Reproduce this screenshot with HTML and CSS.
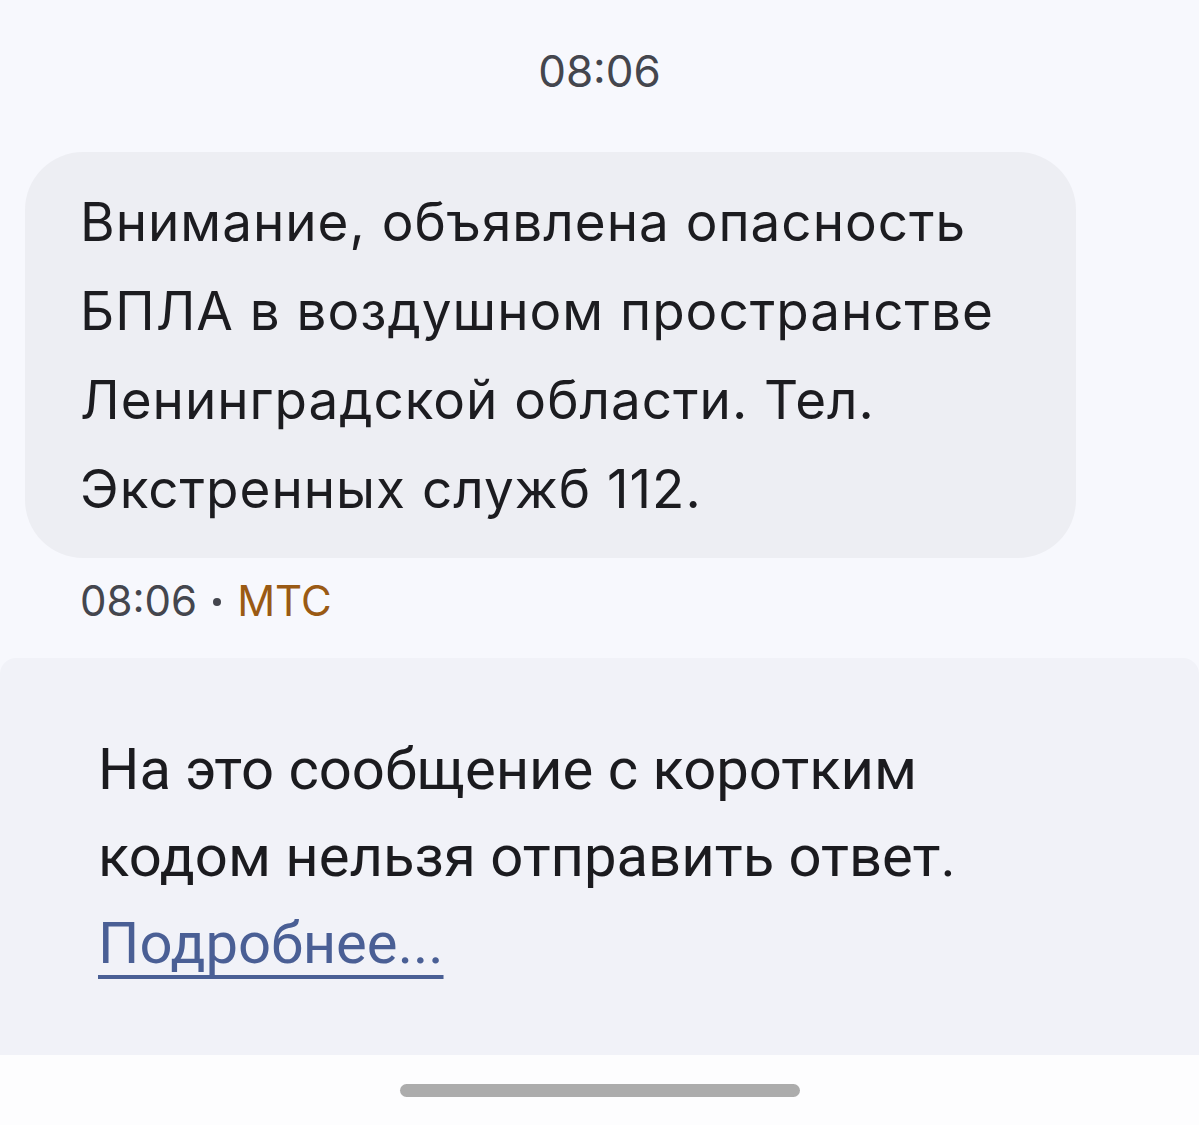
FILE: index.html
```html
<!DOCTYPE html>
<html>
<head>
  <title>Сообщение</title>
  <link rel="stylesheet" href="styles.css">
</head>
<body>
  <div class="chat">
    <div class="day-time">08:06</div>

    <div class="bubble">
      Внимание, объявлена опасность БПЛА в воздушном пространстве Ленинградской области. Тел. Экстренных служб 112.
    </div>

    <div class="meta">08:06 <span class="dot"></span> <span class="sender">МТС</span></div>
  </div>

  <div class="notice">
    <p class="notice-text">
      На это сообщение с коротким<br>
      кодом нельзя отправить ответ.<br>
      <a href="#" class="notice-link">Подробнее...</a>
    </p>
  </div>

  <div class="nav-bar">
    <div class="home-pill"></div>
  </div>
</body>
</html>
```

FILE: styles.css
```css
html, body {
  margin: 0;
  padding: 0;
}

body {
  font-family: Inter, Roboto, "Noto Sans", sans-serif;
  background-color: #f7f8fd;
  color: #1c1c20;
  width: 1199px;
  height: 1125px;
  overflow: hidden;
  display: flex;
  flex-direction: column;
}

.chat {
  padding: 0 0 0 25px;
}

.day-time {
  text-align: center;
  font-size: 44px;
  color: #44464e;
  padding: 44px 25px 0 0;
  height: 152px;
  box-sizing: border-box;
}

.bubble {
  width: 1051px;
  height: 406px;
  box-sizing: border-box;
  background-color: #edeef3;
  border-radius: 58px;
  padding: 26px 40px 0 55px;
  font-size: 53px;
  letter-spacing: 1px;
  line-height: 89px;
}

.meta {
  display: flex;
  align-items: center;
  font-size: 42px;
  color: #44464e;
  padding-left: 55px;
  height: 84px;
  margin-bottom: 16px;
}

.dot {
  width: 8px;
  height: 8px;
  border-radius: 50%;
  background-color: #44464e;
  margin: 4px 16px 0 16px;
}

.sender {
  color: #9a5a14;
}

.notice {
  background-color: #f1f2f8;
  border-radius: 16px 16px 0 0;
  height: 397px;
  box-sizing: border-box;
  padding: 68px 0 0 98px;
}

.notice-text {
  margin: 0;
  font-family: Roboto, "Noto Sans", sans-serif;
  font-size: 58px;
  line-height: 87px;
  color: #1b1b1f;
}

.notice-link {
  color: #4a5f95;
  text-decoration: underline;
  text-decoration-thickness: 4px;
  text-underline-offset: 12px;
}

.nav-bar {
  flex: 1;
  background-color: #fdfdfe;
  display: flex;
  justify-content: center;
  padding-top: 29px;
}

.home-pill {
  width: 400px;
  height: 13px;
  border-radius: 7px;
  background-color: #acacac;
}
```
